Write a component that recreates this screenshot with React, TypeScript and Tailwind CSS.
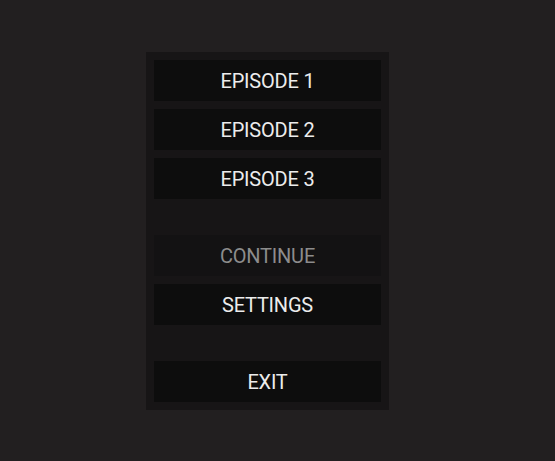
const items = [
  { label: 'EPISODE 1' },
  { label: 'EPISODE 2' },
  { label: 'EPISODE 3', spaceAfter: true },
  { label: 'CONTINUE', disabled: true },
  { label: 'SETTINGS', spaceAfter: true },
  { label: 'EXIT' },
];

function MenuButton({ label, disabled }: { label: string; disabled?: boolean }) {
  return (
    <button
      className={
        disabled
          ? 'h-[41px] w-full bg-[#131213] text-[20px] tracking-[-0.2px] text-[#8c8c8c] cursor-default'
          : 'h-[41px] w-full bg-[#0d0d0d] text-[20px] tracking-[-0.2px] text-[#ececec]'
      }
    >
      {label}
    </button>
  );
}

export default function App() {
  return (
    <div
      className="w-[555px] h-[461px] bg-[#221f20] pt-[52px] pl-[146px]"
      style={{ fontFamily: 'Roboto, "Liberation Sans", sans-serif' }}
    >
      <div className="w-[243px] bg-[#171516] p-2 flex flex-col gap-2">
        {items.map((item) => (
          <div key={item.label} className={item.spaceAfter ? 'mb-[28px]' : ''}>
            <MenuButton label={item.label} disabled={item.disabled} />
          </div>
        ))}
      </div>
    </div>
  );
}
